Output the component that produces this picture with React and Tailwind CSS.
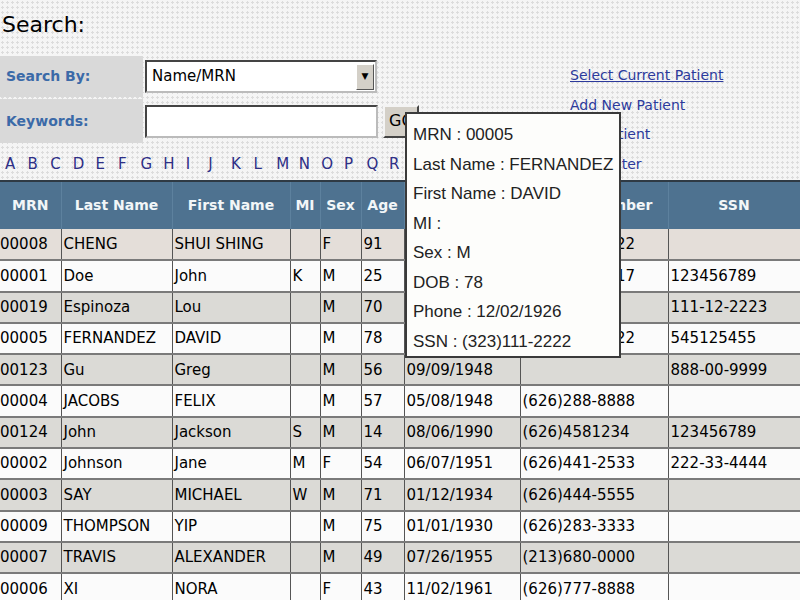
import React from 'react';

const letters = 'ABCDEFGHIJKLMNOPQRSTUVWXYZ'.split('');

const cols = [
  { key: 'mrn', label: 'MRN', w: 'w-[61px]' },
  { key: 'last', label: 'Last Name', w: 'w-[111px]' },
  { key: 'first', label: 'First Name', w: 'w-[118px]' },
  { key: 'mi', label: 'MI', w: 'w-[30px]' },
  { key: 'sex', label: 'Sex', w: 'w-[41px]' },
  { key: 'age', label: 'Age', w: 'w-[43px]' },
  { key: 'dob', label: 'DOB', w: 'w-[116px]' },
  { key: 'phone', label: 'Phone Number', w: 'w-[148px]' },
  { key: 'ssn', label: 'SSN', w: 'w-[132px]' },
];

const patients = [
  ['00008', 'CHENG', 'SHUI SHING', '', 'F', '91', '03/15/1914', '(626)555-1222', ''],
  ['00001', 'Doe', 'John', 'K', 'M', '25', '01/01/1981', '(626)123-4517', '123456789'],
  ['00019', 'Espinoza', 'Lou', '', 'M', '70', '05/05/1935', '', '111-12-2223'],
  ['00005', 'FERNANDEZ', 'DAVID', '', 'M', '78', '12/02/1926', '(323)111-2222', '545125455'],
  ['00123', 'Gu', 'Greg', '', 'M', '56', '09/09/1948', '', '888-00-9999'],
  ['00004', 'JACOBS', 'FELIX', '', 'M', '57', '05/08/1948', '(626)288-8888', ''],
  ['00124', 'John', 'Jackson', 'S', 'M', '14', '08/06/1990', '(626)4581234', '123456789'],
  ['00002', 'Johnson', 'Jane', 'M', 'F', '54', '06/07/1951', '(626)441-2533', '222-33-4444'],
  ['00003', 'SAY', 'MICHAEL', 'W', 'M', '71', '01/12/1934', '(626)444-5555', ''],
  ['00009', 'THOMPSON', 'YIP', '', 'M', '75', '01/01/1930', '(626)283-3333', ''],
  ['00007', 'TRAVIS', 'ALEXANDER', '', 'M', '49', '07/26/1955', '(213)680-0000', ''],
  ['00006', 'XI', 'NORA', '', 'F', '43', '11/02/1961', '(626)777-8888', ''],
];

const tip = [
  'MRN : 00005',
  'Last Name : FERNANDEZ',
  'First Name : DAVID',
  'MI :',
  'Sex : M',
  'DOB : 78',
  'Phone : 12/02/1926',
  'SSN : (323)111-2222',
];

const rowBg = (i) => {
  if (i === 0) return 'bg-[#e4ded9]';
  return i % 2 === 0 ? 'bg-[#dbdad6]' : 'bg-[#fbfbfb]';
};

export default function App() {
  return (
    <div className="relative w-[800px] h-[600px] overflow-hidden bg-[#f5f5f5] bg-[radial-gradient(circle,#dcdcdc_1px,transparent_1.3px)] bg-[length:5px_5px] font-['DejaVu_Sans',sans-serif] text-black">
      {/* top: search form + quick links */}
      <div className="flex">
        <div className="w-[570px]">
          <div className="h-[56px] pl-[2px] pt-[9px] text-[22px] leading-[32px]">Search:</div>

          <div className="flex items-center h-[41px]">
            <div className="w-[143px] h-full flex items-center pl-[6px] bg-[#d9d9d9] text-[14px] font-bold text-[#3b6aa8]">
              Search By:
            </div>
            <div className="ml-[2px] w-[232px] h-[33px] flex items-center bg-white border-2 border-t-[#444] border-l-[#444] border-b-[#bbb] border-r-[#bbb]">
              <span className="flex-1 pl-[5px] text-[15px]">Name/MRN</span>
              <span className="w-[18px] h-[26px] mr-[1px] flex items-center justify-center bg-[#d4d0c8] border border-t-white border-l-white border-b-[#555] border-r-[#555] text-[9px]">
                ▼
              </span>
            </div>
          </div>

          <div className="flex items-center h-[44px] mt-[2px]">
            <div className="w-[143px] h-full flex items-center pl-[6px] bg-[#d9d9d9] text-[14px] font-bold text-[#3b6aa8]">
              Keywords:
            </div>
            <div className="ml-[2px] w-[233px] h-[33px] bg-white border-2 border-t-[#444] border-l-[#444] border-b-[#bbb] border-r-[#bbb]" />
            <button className="ml-[5px] w-[36px] h-[33px] bg-[#d4d0c8] border-2 border-t-[#f4f4f4] border-l-[#f4f4f4] border-b-[#444] border-r-[#444] text-[16px] text-left pl-[4px]">
              GO
            </button>
          </div>

          <div className="flex items-center h-[37px] pt-[5px] pl-[5px] text-[15px] text-[#2e2f86]">
            {letters.map((l) => (
              <span key={l} className="w-[22.6px] shrink-0">
                {l}
              </span>
            ))}
          </div>
        </div>

        <div className="pt-[61px] flex flex-col text-[14px] leading-[29.5px] text-[#2c3a9c]">
          <span className="underline">Select Current Patient</span>
          <span>Add New Patient</span>
          <span>Edit Patient</span>
          <span>Encounter</span>
        </div>
      </div>

      {/* patient list */}
      <table className="table-fixed border-collapse w-[800px]">
        <colgroup>
          {cols.map((c) => (
            <col key={c.key} className={c.w} />
          ))}
        </colgroup>
        <thead>
          <tr className="h-[48px] bg-[#4e7290] border-t-2 border-[#2f3a44]">
            {cols.map((c) => (
              <th
                key={c.key}
                className="text-center text-[14px] font-bold text-[#f2f6f8] border-r border-[#5d819e] whitespace-nowrap overflow-hidden"
              >
                {c.label}
              </th>
            ))}
          </tr>
        </thead>
        <tbody>
          {patients.map((p, i) => (
            <tr key={p[0]} className={`${rowBg(i)} h-[31.3px] border-b-2 border-[#7a7a7a]`}>
              {p.map((v, j) => (
                <td
                  key={j}
                  className="pl-[2px] text-[15px] whitespace-nowrap overflow-hidden border-r border-[#555] first:pl-0"
                >
                  {v}
                </td>
              ))}
            </tr>
          ))}
        </tbody>
      </table>

      {/* hover popup */}
      <div className="absolute left-[405px] top-[112px] w-[216px] h-[246px] bg-[#fdfdfb] border-2 border-[#3a3a3a] pl-[6px] pt-[6px] font-['Liberation_Sans',sans-serif] text-[17px] leading-[29.5px] text-[#222]">
        {tip.map((t) => (
          <div key={t} className="whitespace-nowrap">
            {t}
          </div>
        ))}
      </div>
    </div>
  );
}
